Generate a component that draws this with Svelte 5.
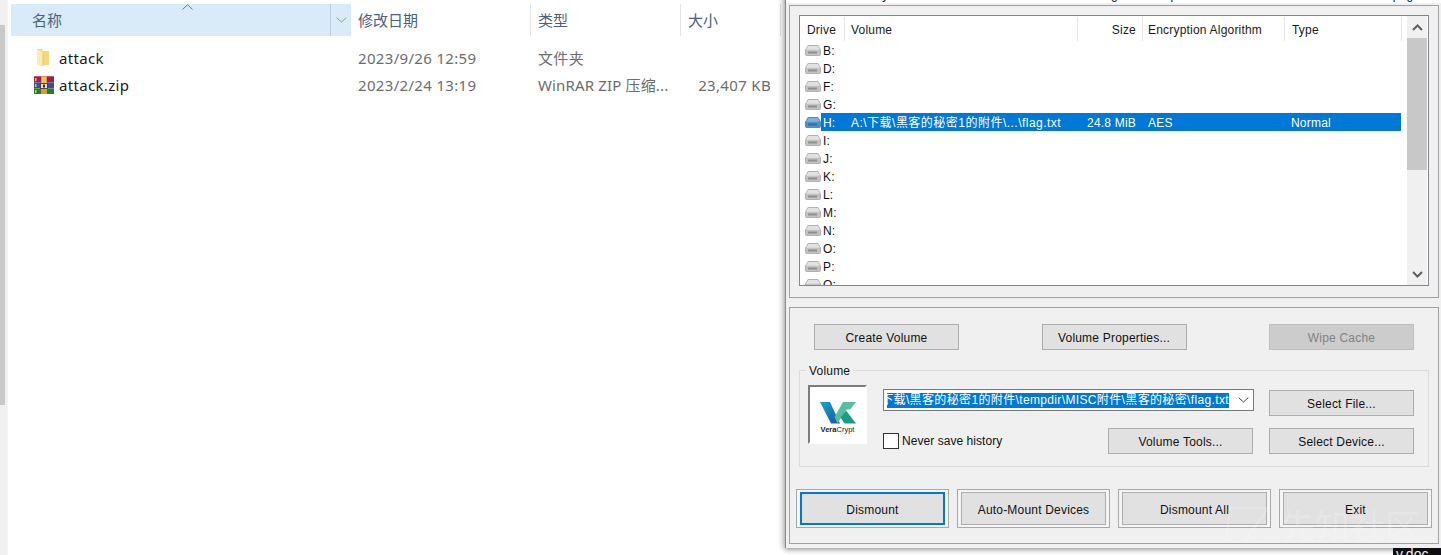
<script>
  const drives = ['B','D','F','G','H','I','J','K','L','M','N','O','P','Q'];
</script>

<div class="screen">
  <div class="side-scroll"><div class="side-thumb"></div></div>

  <section class="explorer">
    <div class="ex-head">
      <div class="ex-h name">
        <span>名称</span>
        <svg class="sort" width="11" height="6" viewBox="0 0 11 6"><path d="M.5 5.500 5.500.7l5 4.800" fill="none" stroke="#70767d"/></svg>
        <span class="drop"><svg width="11" height="6" viewBox="0 0 11 6"><path d="M.7.7 5.500 5l4.800-4.300" fill="none" stroke="#8a9aa9"/></svg></span>
      </div>
      <div class="ex-h">修改日期</div>
      <div class="ex-h">类型</div>
      <div class="ex-h last">大小</div>
    </div>
    <div class="ex-rows">
      <div class="ex-row">
        <div class="ex-name">
          <span class="ic">
            <svg width="20" height="20" viewBox="0 0 20 20">
              <path d="M3 1h5l1 2h6v14H3z" fill="#f6d878"/>
              <path d="M3 1.500 9 3.600V19L3 16.500z" fill="#fdebb0"/>
              <path d="M9 3.600V18" fill="none" stroke="#e3bd55" stroke-width=".7"/>
            </svg>
          </span>
          attack
        </div>
        <div>2023/9/26 12:59</div>
        <div>文件夹</div>
        <div></div>
      </div>
      <div class="ex-row">
        <div class="ex-name">
          <span class="ic">
            <svg width="20" height="20" viewBox="0 0 20 20">
              <rect y="1" width="20" height="6" fill="#9c2148"/>
              <rect y="7" width="20" height="6" fill="#46489c"/>
              <rect y="13" width="20" height="6" fill="#2a7838"/>
              <rect y="1" width="20" height="1" fill="#c9506f"/>
              <rect y="7" width="20" height="1" fill="#7476c8"/>
              <rect y="13" width="20" height="1" fill="#56a865"/>
              <rect x="1" y="3" width="1.500" height="3" fill="#e8c050"/>
              <rect x="1" y="9" width="1.500" height="3" fill="#e8c050"/>
              <rect x="1" y="15" width="1.500" height="3" fill="#e8c050"/>
              <rect x="7" y="1" width="6" height="18" fill="#d89a3c"/>
              <rect x="8" y="2" width="4" height="6" fill="#f0c060"/>
              <rect x="6.500" y="8.500" width="7" height="5" fill="#e8dfc8" stroke="#3a2a1a" stroke-width=".8"/>
              <rect x="9" y="9.500" width="2" height="3" fill="#3a2a1a"/>
            </svg>
          </span>
          attack.zip
        </div>
        <div>2023/2/24 13:19</div>
        <div class="kind">WinRAR ZIP 压缩...</div>
        <div class="size">23,407 KB</div>
      </div>
    </div>
  </section>

  <section class="window">
    <nav class="menu">
      <span class="m1">Volumes</span><span class="m2">System</span><span class="m3">Favorites</span><span class="m4">Tools</span><span class="m5">Settings</span><span class="m6">Help</span><span class="m7">Homepage</span>
    </nav>
    <div class="body">
      <div class="panel top-panel">
        <div class="list">
          <div class="list-main">
            <div class="lh">
              <div class="c-drive">Drive</div>
              <div class="c-vol">Volume</div>
              <div class="c-size">Size</div>
              <div class="c-alg">Encryption Algorithm</div>
              <div class="c-type">Type</div>
            </div>
            <div class="rows">
              {#each drives as d}
                <div class="lr" class:sel={d === 'H'}>
                  <span class="disk">
                    <svg width="16" height="11" viewBox="0 0 16 11">
                      <path d="M3 .5h10l2.500 4.500v4.500a1 1 0 0 1-1 1h-13a1 1 0 0 1-1-1V5z" fill={d === 'H' ? '#4f8fc8' : '#c2c2c2'} stroke={d === 'H' ? '#3f7fb8' : '#a6a6a6'} stroke-width=".8"/>
                      <path d="M3.300 1h9.400L15 4.800H1z" fill={d === 'H' ? '#7fb0dc' : '#e2e2e2'}/>
                      <rect x="3" y="6.500" width="9" height="2" fill={d === 'H' ? '#2f6fa8' : '#8e8e8e'}/>
                    </svg>
                  </span>
                  <div class="row-fill">
                    <span class="letter">{d}:</span>
                    {#if d === 'H'}
                      <span class="rv">A:\下载\黑客的秘密1的附件\...\flag.txt</span>
                      <span class="rs">24.8 MiB</span>
                      <span class="ra">AES</span>
                      <span class="rt">Normal</span>
                    {/if}
                  </div>
                </div>
              {/each}
            </div>
          </div>
          <div class="vbar">
            <div class="arrow"><svg width="11" height="7" viewBox="0 0 11 7"><path d="M1 6 5.500 1.500 10 6" fill="none" stroke="#606060" stroke-width="2"/></svg></div>
            <div class="thumb"></div>
            <div class="arrow down"><svg width="11" height="7" viewBox="0 0 11 7"><path d="M1 1 5.500 5.500 10 1" fill="none" stroke="#606060" stroke-width="2"/></svg></div>
          </div>
        </div>
      </div>

      <div class="panel bottom-panel">
        <div class="top-btns">
          <button>Create Volume</button>
          <button>Volume Properties...</button>
          <button class="off">Wipe Cache</button>
        </div>
        <fieldset class="volume">
          <legend>Volume</legend>
          <div class="logo">
            <svg width="36" height="22" viewBox="0 0 36 22">
              <defs>
                <linearGradient id="vblue" x1="0" y1="0" x2="1" y2="1">
                  <stop offset="0" stop-color="#14a6cf"/>
                  <stop offset="1" stop-color="#1b55a3"/>
                </linearGradient>
              </defs>
              <path d="M0 0H10L20 21.500H11Z" fill="url(#vblue)"/>
              <path d="M17.500 21.500 14.500 15 23 0H36L30 7.500H26.500Z" fill="#55bfa0"/>
              <path d="M26 8.500 36 21.500H24.500L20.500 15.500Z" fill="#1c9c82"/>
            </svg>
            <span class="logo-text"><b>Vera</b>Crypt</span>
          </div>
          <div class="vol-mid">
            <div class="combo">
              <div class="combo-clip"><span class="path-sel">下载\黑客的秘密1的附件\tempdir\MISC附件\黑客的秘密\flag.txt</span></div>
              <svg width="11" height="6" viewBox="0 0 11 6"><path d="M.7.700 5.500 5l4.800-4.300" fill="none" stroke="#444"/></svg>
            </div>
            <div class="hist">
              <label class="check"><span class="box"></span>Never save history</label>
              <button>Volume Tools...</button>
            </div>
          </div>
          <div class="vol-right">
            <button>Select File...</button>
            <button>Select Device...</button>
          </div>
        </fieldset>
        <div class="actions">
          <div class="frame"><button class="focus">Dismount</button></div>
          <div class="frame"><button>Auto-Mount Devices</button></div>
          <div class="frame"><button>Dismount All</button></div>
          <div class="frame"><button>Exit</button></div>
        </div>
      </div>
    </div>
  </section>

  <svg class="wm-logo" width="48" height="38" viewBox="0 0 48 38">
    <path d="M6 2H44L20 36H40M6 2 2 36H20" fill="none" stroke="#fff" stroke-opacity=".18" stroke-width="2"/>
  </svg>
  <div class="watermark">先知社区</div>
  <div class="doc">v.doc</div>
</div>

<style>
  :global(body) { margin: 0; background: #fff; }
  .screen {
    position: relative;
    width: 1441px;
    height: 555px;
    overflow: hidden;
    background: #fff;
    font-family: "Noto Sans", "Noto Sans CJK SC", sans-serif;
  }
  .side-scroll {
    position: absolute;
    left: 0; top: 0;
    width: 8px; height: 555px;
    background: #f0f0f0;
    border-right: 1px solid #f4f4f4;
    box-sizing: border-box;
  }
  .side-thumb {
    margin-top: 25px;
    width: 5px; height: 380px;
    background: #c8c8c8;
  }

  .explorer {
    width: 781px;
    padding: 4px 0 0 11px;
    box-sizing: border-box;
    font-size: 15px;
    color: #6d6d6d;
  }
  .ex-head, .ex-row {
    display: grid;
    grid-template-columns: 340px 180px 150px 100px;
  }
  .ex-head { height: 32px; }
  .ex-h {
    position: relative;
    display: flex;
    align-items: center;
    padding: 0 0 2px 7px;
    border-right: 1px solid #e3e5e7;
    color: #4c607a;
    font-size: 15px;
  }
  .ex-h.name {
    background: #d9ebf9;
    padding-left: 21px;
    border-right: 0;
  }
  .sort { position: absolute; left: 171px; top: 0; }
  .drop {
    position: absolute;
    right: 0; top: 0; bottom: 0;
    width: 20px;
    border-left: 1px solid #b9cfe0;
    display: flex;
    align-items: center;
    justify-content: center;
  }
  .ex-rows { padding-top: 8px; }
  .ex-row { height: 27px; align-items: center; letter-spacing: .33px; }
  .ex-row > div:not(.ex-name) { padding-left: 7px; }
  .ex-row > div.kind { letter-spacing: .15px; white-space: nowrap; }
  .ex-row > div.size { padding: 0 10px 0 0; text-align: right; }
  .ex-name {
    display: flex;
    align-items: center;
    gap: 5px;
    padding-left: 23px;
    font-size: 15px;
    color: #1a1a1a;
  }
  .ic { display: block; width: 20px; height: 20px; }
  .ic svg { display: block; }

  .window {
    position: absolute;
    left: 785px;
    top: -20px;
    width: 670px;
    height: 568px;
    background: #f0f0f0;
    border-left: 1px solid #8a8a8a;
    box-sizing: border-box;
    box-shadow: -4px 0 5px rgba(0,0,0,.12), 0 2px 5px rgba(0,0,0,.35);
    font-family: "Liberation Sans", "Noto Sans CJK SC", sans-serif;
    font-size: 12px;
    letter-spacing: .2px;
    color: #111;
  }
  .menu {
    position: relative;
    height: 23px;
    background: #fff;
    color: #111;
    display: block;
  }
  .menu span { position: absolute; top: 8px; font-size: 12px; }
  .m1 { left: 28px; }
  .m2 { left: 88px; }
  .m3 { left: 150px; }
  .m4 { left: 220px; }
  .m5 { left: 293px; }
  .m6 { left: 366px; }
  .m7 { left: 574px; }

  .body { padding: 2px 0 0 3px; display: flex; flex-direction: column; gap: 9px; }
  .panel {
    width: 650px;
    border: 1px solid #a0a0a0;
    box-sizing: border-box;
  }
  .top-panel { height: 293px; padding: 9px 0 0 9px; }
  .bottom-panel { height: 237px; }

  .list {
    width: 630px;
    height: 271px;
    box-sizing: border-box;
    border: 1px solid #82858c;
    background: #fff;
    display: flex;
    overflow: hidden;
  }
  .list-main { width: 607px; flex: none; }
  .lh {
    display: grid;
    grid-template-columns: 45px 233px 65px 142px 117px;
    height: 24px;
    width: 602px;
    margin-top: 1px;
    color: #1a1a1a;
  }
  .lh > div {
    display: flex;
    align-items: center;
    padding: 2px 0 0 6px;
    border-right: 1px solid #e5e5e5;
    box-sizing: border-box;
  }
  .lh .c-drive { padding-left: 7px; }
  .lh .c-size { justify-content: flex-end; padding: 2px 6px 0 0; }
  .lh .c-alg { padding-left: 5px; }
  .lh .c-type { padding-left: 7px; }
  .rows { height: 244px; overflow: hidden; }
  .lr { display: flex; height: 18px; align-items: center; }
  .disk { width: 21px; padding-left: 5px; box-sizing: border-box; flex: none; display: flex; }
  .disk svg { display: block; }
  .row-fill {
    width: 580px;
    height: 18px;
    display: grid;
    grid-template-columns: 28px 227px 65px 142px 1fr;
    align-items: center;
    box-sizing: border-box;
    padding: 2px 0 0 2px;
  }
  .sel .row-fill { background: #0078d7; color: #fff; }
  .rv { white-space: nowrap; overflow: hidden; letter-spacing: .48px; margin-top: -4px; }
  .rs { text-align: right; padding-right: 7px; }
  .ra { padding-left: 5px; }
  .rt { padding-left: 6px; }

  .vbar {
    width: 20px;
    background: #f0f0f0;
    display: flex;
    flex-direction: column;
    flex: none;
  }
  .arrow {
    height: 22px;
    display: flex;
    align-items: center;
    justify-content: center;
    flex: none;
  }
  .thumb { height: 132px; background: #c8c8c8; }
  .arrow.down { margin-top: auto; }

  button {
    font: inherit;
    letter-spacing: inherit;
    color: #111;
    width: 145px;
    height: 26px;
    padding: 2px 0 0;
    background: #e1e1e1;
    border: 1px solid #adadad;
    border-radius: 0;
    box-sizing: border-box;
  }
  button.off { background: #ccc; border-color: #bfbfbf; color: #838383; }

  .top-btns {
    display: flex;
    justify-content: space-between;
    padding: 16px 24px 0 24px;
    height: 26px;
    box-sizing: content-box;
  }
  .volume {
    position: relative;
    display: flex;
    box-sizing: border-box;
    margin: 20px 0 0 9px;
    padding: 0;
    width: 630px;
    height: 97px;
    border: 1px solid #dcdcdc;
    min-inline-size: 0;
  }
  .volume legend {
    position: absolute;
    left: 6px; top: -7px;
    background: #f0f0f0;
    padding: 0 3px;
    line-height: 15px;
  }
  .logo {
    width: 59px;
    height: 59px;
    flex: none;
    margin: 14px 0 0 8px;
    box-sizing: border-box;
    background: #fff;
    border: 2px solid #fff;
    border-top-color: #7c7c7c;
    border-left-color: #7c7c7c;
    display: flex;
    flex-direction: column;
    align-items: center;
    padding-top: 15px;
  }
  .logo-text {
    font-family: "Liberation Sans", sans-serif;
    font-size: 7.500px;
    letter-spacing: 0;
    line-height: 9px;
    margin-top: 1px;
    white-space: nowrap;
    color: #222;
  }
  .vol-mid {
    width: 371px;
    margin: 18px 0 0 16px;
    flex: none;
    display: flex;
    flex-direction: column;
  }
  .combo {
    height: 22px;
    box-sizing: border-box;
    border: 1px solid #7a7a7a;
    background: #fff;
    display: flex;
    align-items: center;
    padding-left: 3px;
  }
  .combo svg { margin-left: 9px; flex: none; }
  .combo-clip {
    width: 342px;
    overflow: hidden;
    display: flex;
    justify-content: flex-end;
    flex: none;
  }
  .path-sel {
    background: #0078d7;
    color: #fff;
    white-space: nowrap;
    line-height: 15px;
    flex: none;
    letter-spacing: .36px;
  }
  .hist {
    display: flex;
    justify-content: space-between;
    align-items: center;
    margin: 17px 1px 0 0;
  }
  .check { display: flex; align-items: center; gap: 3px; letter-spacing: .05px; }
  .box {
    width: 16px; height: 16px;
    box-sizing: border-box;
    border: 1px solid #333;
    background: #fff;
    display: block;
  }
  .vol-right {
    margin: 19px 0 0 15px;
    display: flex;
    flex-direction: column;
    gap: 12px;
  }
  .actions {
    display: flex;
    gap: 8px;
    padding: 22px 0 0 6px;
  }
  .frame {
    width: 153px;
    height: 39px;
    box-sizing: border-box;
    border: 1px solid #a8a8a8;
    padding: 2px 3px;
    background: #f5f5f5;
  }
  .frame button { width: 100%; height: 100%; display: block; }
  .frame button.focus { border: 2px solid #0078d7; }

  .wm-logo { position: absolute; left: 1224px; top: 506px; }
  .watermark {
    position: absolute;
    left: 1280px; top: 503px;
    font-family: "Noto Sans CJK SC", sans-serif;
    font-size: 35px;
    line-height: 44px;
    color: rgba(255,255,255,.2);
    white-space: nowrap;
  }
  .doc {
    position: absolute;
    left: 1393px; top: 548px;
    width: 48px; height: 7px;
    background: #0e0e12;
    color: #eee;
    font-family: "Liberation Sans", sans-serif;
    font-size: 14px;
    line-height: 13px;
    overflow: hidden;
    padding-left: 3px;
    box-sizing: border-box;
  }
</style>
